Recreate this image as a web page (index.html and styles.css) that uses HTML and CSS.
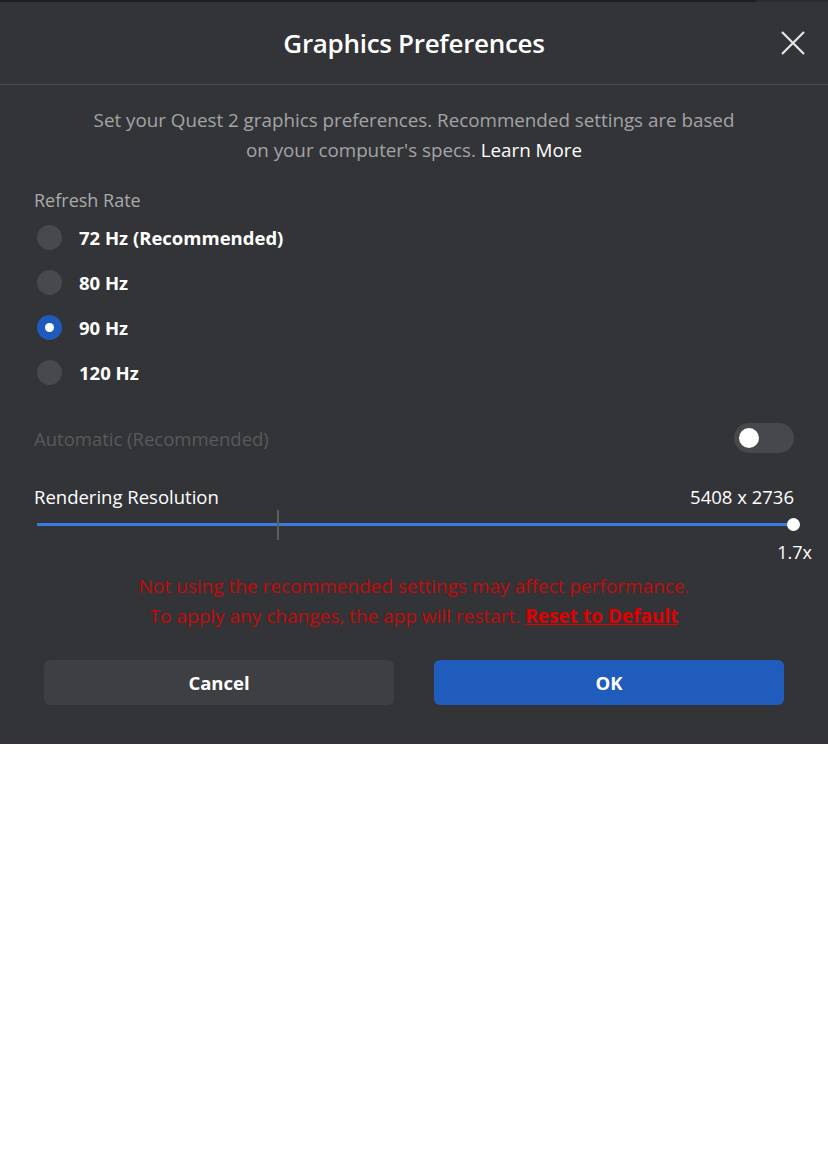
FILE: index.html
```html
<!DOCTYPE html>
<html>
<head>
    <title>Graphics Preferences</title>
    <link rel="stylesheet" href="styles.css">
</head>
<body>

<div class="dialog">
    <div class="topbar"><div class="topbar-left"></div><div class="topbar-right"></div></div>
    <header class="dialog-header">
        <h1>Graphics Preferences</h1>
        <button class="close" aria-label="Close">
            <svg width="26" height="26" viewBox="0 0 26 26">
                <path d="M2 2 L24 24 M24 2 L2 24" stroke="#e6e6e6" stroke-width="2.2" fill="none"/>
            </svg>
        </button>
    </header>

    <div class="dialog-body">
        <p class="intro">
            Set your Quest 2 graphics preferences. Recommended settings are based<br>
            on your computer's specs. <a href="#">Learn More</a>
        </p>

        <div class="section-label">Refresh Rate</div>
        <ul class="radios">
            <li><span class="radio"></span>72 Hz (Recommended)</li>
            <li><span class="radio"></span>80 Hz</li>
            <li><span class="radio checked"></span>90 Hz</li>
            <li><span class="radio"></span>120 Hz</li>
        </ul>

        <div class="row auto-row">
            <span class="muted">Automatic (Recommended)</span>
            <span class="toggle"><span class="knob"></span></span>
        </div>

        <div class="row res-row">
            <span>Rendering Resolution</span>
            <span>5408 x 2736</span>
        </div>
        <div class="slider">
            <div class="track"></div>
            <div class="tick"></div>
            <div class="thumb"></div>
        </div>
        <div class="scale">1.7x</div>

        <p class="warning">
            Not using the recommended settings may affect performance.<br>
            To apply any changes, the app will restart. <a href="#">Reset to Default</a>
        </p>

        <div class="buttons">
            <button class="btn cancel">Cancel</button>
            <button class="btn ok">OK</button>
        </div>
    </div>
</div>

</body>
</html>
```

FILE: styles.css
```css
body {
    margin: 0;
    background-color: #ffffff;
    font-family: 'Open Sans', 'Noto Sans', sans-serif;
}
.dialog {
    background-color: #333437;
    height: 744px;
    color: #ffffff;
}
.topbar {
    display: flex;
    height: 2px;
}
.topbar-left {
    flex: 1;
    background-color: #1e1f22;
}
.topbar-right {
    width: 72px;
    background-color: #2a2b2e;
}
.dialog-header {
    height: 82px;
    border-bottom: 1px solid #4b4c4f;
    display: flex;
    align-items: center;
    justify-content: center;
    position: relative;
}
.dialog-header h1 {
    margin: 0;
    font-size: 26px;
    font-weight: 600;
    letter-spacing: -0.3px;
}
.close {
    position: absolute;
    right: 22px;
    top: 28px;
    background: none;
    border: none;
    padding: 0;
    width: 26px;
    height: 26px;
    cursor: pointer;
}
.dialog-body {
    padding: 0 34px;
}
.intro {
    margin: 20px 0 0;
    text-align: center;
    color: #a3a4a6;
    font-size: 18.8px;
    line-height: 30px;
}
.intro a {
    color: #ffffff;
    text-decoration: none;
}
.section-label {
    margin-top: 22px;
    color: #a9aaac;
    font-size: 18px;
    line-height: 26px;
}
.radios {
    list-style: none;
    margin: 0;
    padding: 0;
}
.radios li {
    display: flex;
    align-items: center;
    height: 45px;
    font-size: 18.5px;
    font-weight: 700;
}
.radios li:first-child {
    margin-top: 2px;
}
.radio {
    width: 25px;
    height: 25px;
    border-radius: 50%;
    background-color: #48494c;
    margin: 0 17px 0 3px;
    position: relative;
}
.radio.checked {
    background-color: #1f5bbd;
}
.radio.checked::after {
    content: "";
    position: absolute;
    width: 9px;
    height: 9px;
    border-radius: 50%;
    background-color: #ffffff;
    left: 8px;
    top: 8px;
}
.row {
    display: flex;
    justify-content: space-between;
    align-items: center;
    font-size: 18.5px;
}
.auto-row {
    margin-top: 23px;
    height: 40px;
}
.muted {
    color: #58595c;
}
.toggle {
    width: 60px;
    height: 30px;
    border-radius: 15px;
    background-color: #47484b;
    position: relative;
}
.toggle .knob {
    position: absolute;
    left: 5px;
    top: 5px;
    width: 20px;
    height: 20px;
    border-radius: 50%;
    background-color: #ffffff;
}
.res-row {
    margin-top: 25px;
    height: 26px;
}
.slider {
    position: relative;
    height: 30px;
    margin: 1px 0 0 3px;
}
.track {
    position: absolute;
    left: 0;
    right: 0;
    top: 13px;
    height: 3px;
    background-color: #3a7be2;
}
.tick {
    position: absolute;
    left: 240px;
    top: 0;
    width: 2px;
    height: 30px;
    background-color: #5c5d60;
}
.thumb {
    position: absolute;
    right: -6px;
    top: 8px;
    width: 13px;
    height: 13px;
    border-radius: 50%;
    background-color: #ffffff;
}
.scale {
    text-align: right;
    margin-right: -18px;
    font-size: 18px;
    line-height: 24px;
}
.warning {
    margin: 7px 0 0;
    text-align: center;
    color: #c30a0a;
    font-size: 19px;
    line-height: 30px;
}
.warning a {
    color: #e00000;
    font-weight: 700;
    text-decoration: underline;
}
.buttons {
    display: flex;
    justify-content: space-between;
    margin: 29px 10px 0;
}
.btn {
    width: 350px;
    height: 45px;
    border: none;
    border-radius: 6px;
    color: #ffffff;
    font-family: 'Open Sans', 'Noto Sans', sans-serif;
    font-size: 18.5px;
    font-weight: 700;
    cursor: pointer;
}
.cancel {
    background-color: #3e3f42;
}
.ok {
    background-color: #1f5cbb;
}
```
